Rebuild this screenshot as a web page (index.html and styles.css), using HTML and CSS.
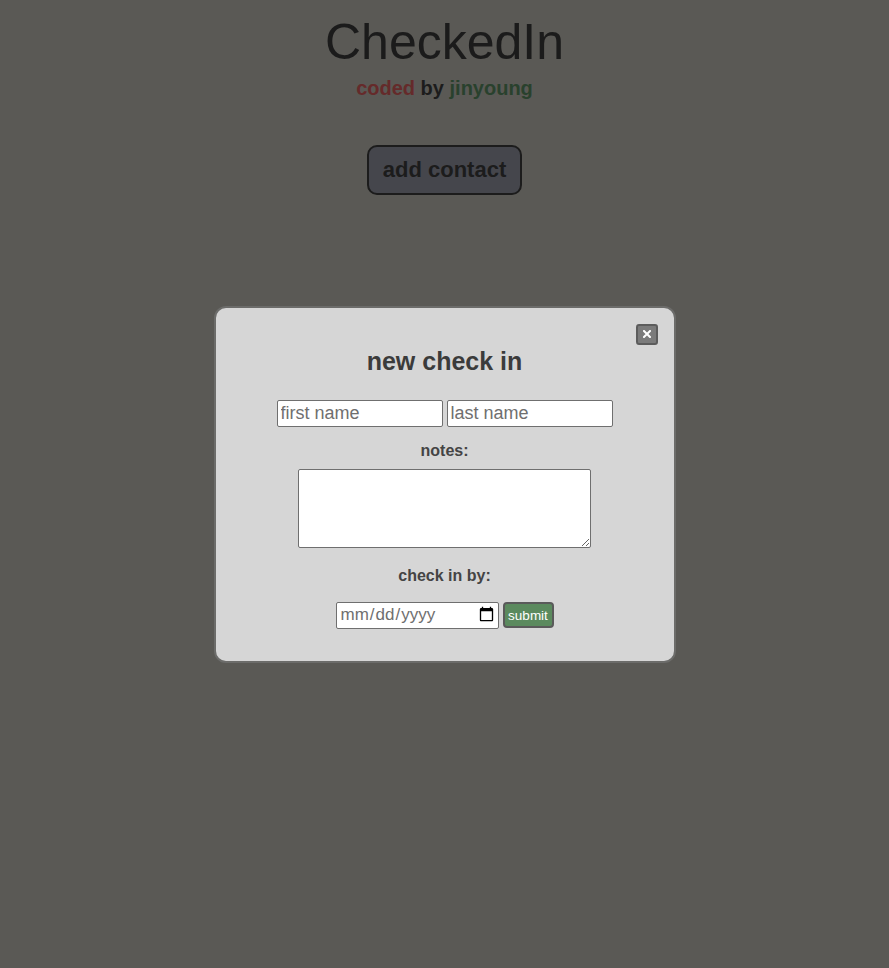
FILE: index.html
```html
<!DOCTYPE html>
<html lang="en">
<head>
<meta charset="utf-8">
<title>CheckedIn</title>
<link rel="stylesheet" href="styles.css">
</head>
<body>
<header class="header">
  <h1 class="title">CheckedIn</h1>
  <p class="byline"><span class="coded">coded</span> by <span class="author">jinyoung</span></p>
  <button class="add-btn" type="button">add contact</button>
</header>

<div class="overlay">
  <form class="modal">
    <div class="close-row">
      <button class="close-btn" type="button" aria-label="close">
        <svg class="close-icon" viewBox="0 0 8 8" width="8" height="8"><path d="M1 1 L7 7 M7 1 L1 7" stroke="#fff" stroke-width="2" stroke-linecap="square" fill="none"/></svg>
      </button>
    </div>
    <h2 class="modal-title">new check in</h2>
    <div class="name-row">
      <input class="text-input" type="text" placeholder="first name">
      <input class="text-input" type="text" placeholder="last name">
    </div>
    <label class="field-label">notes:</label>
    <textarea class="notes"></textarea>
    <label class="field-label label-date">check in by:</label>
    <div class="date-row">
      <input class="date-input" type="date">
      <button class="submit-btn" type="button">submit</button>
    </div>
  </form>
</div>
</body>
</html>
```

FILE: styles.css
```css
html, body {
  margin: 0;
  padding: 0;
  height: 100%;
}
body {
  background: #5a5955;
  font-family: "Liberation Sans", Arial, sans-serif;
  color: #1c1c1c;
}
.header {
  display: flex;
  flex-direction: column;
  align-items: center;
  padding-top: 14px;
}
.title {
  margin: 0;
  font-size: 50px;
  font-weight: 400;
  line-height: 57px;
  color: #1b1b1b;
}
.byline {
  margin: 6px 0 0;
  font-size: 20px;
  font-weight: 700;
  line-height: 23px;
  color: #1c1c1c;
}
.coded { color: #652a2a; }
.author { color: #29412d; }
.add-btn {
  margin-top: 45px;
  width: 155px;
  height: 50px;
  background: #45464c;
  border: 2px solid #1c1c1c;
  border-radius: 10px;
  font-family: "Liberation Sans", Arial, sans-serif;
  font-size: 22px;
  font-weight: 700;
  color: #1c1c1c;
  padding: 0;
}
.overlay {
  position: fixed;
  inset: 0;
  display: flex;
  align-items: center;
  justify-content: center;
}
.modal {
  box-sizing: border-box;
  width: 462px;
  background: #d6d6d6;
  border: 2px solid #6c6c6a;
  border-radius: 12px;
  padding: 16px 16px 32px;
  display: flex;
  flex-direction: column;
  align-items: center;
  color: #3d3d3d;
}
.close-row {
  align-self: stretch;
  display: flex;
  justify-content: flex-end;
}
.close-btn {
  box-sizing: border-box;
  width: 22px;
  height: 21px;
  padding: 0;
  background: #7b7b7b;
  border: 2px solid #5c5c5c;
  border-radius: 3px;
  display: flex;
  align-items: center;
  justify-content: center;
}
.close-icon {
  display: block;
}
.modal-title {
  margin: 2px 0 0;
  font-size: 25px;
  font-weight: 700;
  line-height: 28px;
  color: #3b3b3b;
}
.name-row {
  margin-top: 25px;
  display: flex;
  gap: 4px;
}
.text-input {
  box-sizing: border-box;
  width: 166px;
  height: 27px;
  border: 1px solid #6f6f6f;
  border-radius: 2px;
  padding: 0 3px;
  background: #fff;
  font-family: "Liberation Sans", Arial, sans-serif;
  font-size: 18px;
  color: #222;
}
.text-input::placeholder { color: #6f6f6f; }
.field-label {
  margin-top: 15px;
  font-size: 16px;
  font-weight: 700;
  line-height: 18px;
  color: #444;
}
.notes {
  box-sizing: border-box;
  margin-top: 9px;
  width: 293px;
  height: 79px;
  border: 1px solid #6f6f6f;
  border-radius: 2px;
  background: #fff;
  resize: both;
}
.label-date {
  margin-top: 19px;
}
.date-row {
  margin-top: 17px;
  display: flex;
  align-items: center;
  gap: 4px;
}
.date-input {
  box-sizing: border-box;
  width: 163px;
  height: 27px;
  border: 1px solid #6f6f6f;
  border-radius: 2px;
  background: #fff;
  padding: 0 3px;
  font-family: "Liberation Sans", Arial, sans-serif;
  font-size: 17px;
  color: #6f6f6f;
}
.date-input::-webkit-calendar-picker-indicator {
  width: 17px;
  height: 19px;
  padding: 0;
  margin: 0;
}
.submit-btn {
  box-sizing: border-box;
  width: 51px;
  height: 26px;
  padding: 0;
  background: #5b8a5e;
  border: 2px solid #5a5a5a;
  border-radius: 4px;
  color: #fff;
  font-family: "Liberation Sans", Arial, sans-serif;
  font-size: 13.5px;
}
```
